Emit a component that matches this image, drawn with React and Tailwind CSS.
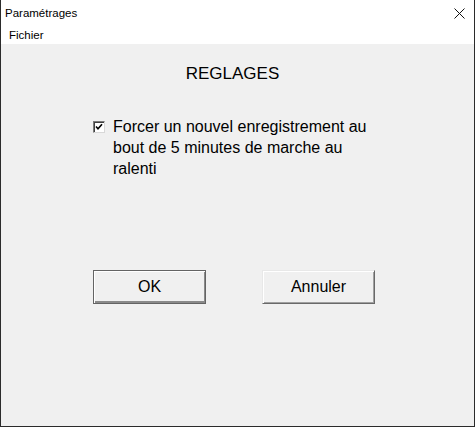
export default function App() {
  return (
    <div
      className="w-[475px] h-[427px] flex flex-col bg-[#f0f0f0] border-x border-b border-[#2b2b2b] text-black"
      style={{ fontFamily: '"Liberation Sans", Arial, sans-serif' }}
    >
      {/* Barre de titre */}
      <div className="h-[27px] bg-white flex items-center justify-between pl-[4px] pr-[9px]">
        <span className="text-[11.5px]">Paramétrages</span>
        <svg width="11" height="11" viewBox="0 0 11 11" className="mb-[1px]">
          <path d="M0.5 0.5 L10.5 10.5 M10.5 0.5 L0.5 10.5" stroke="#111" strokeWidth="1" fill="none" />
        </svg>
      </div>

      {/* Menu */}
      <div className="h-[17px] bg-white flex items-center pl-[8px]">
        <span className="text-[11.5px]">Fichier</span>
      </div>

      {/* Contenu */}
      <div className="flex-1 flex flex-col pt-[20px]">
        <div className="pr-[10px] text-center text-[17px] leading-[20px]">REGLAGES</div>

        <div className="flex items-start gap-[8px] mt-[32px] pl-[92px]">
          <div className="w-[12px] h-[12px] mt-[5px] bg-white border border-t-[#7a7a7a] border-l-[#7a7a7a] border-r-[#d8d8d8] border-b-[#d8d8d8] shadow-[inset_1px_1px_0_#404040] flex items-center justify-center">
            <svg width="8" height="8" viewBox="0 0 8 8">
              <path d="M1 3.5 L3 5.8 L7 1.2" stroke="#000" strokeWidth="1.6" fill="none" />
            </svg>
          </div>
          <p className="w-[262px] text-[16px] leading-[21px]">
            Forcer un nouvel enregistrement au bout de 5 minutes de marche au ralenti
          </p>
        </div>

        <div className="flex gap-[56px] mt-[91px] pl-[92px]">
          <button className="w-[113px] h-[34px] text-[16px] bg-[#f0f0f0] border border-[#646464] shadow-[inset_1px_1px_0_#ffffff,inset_-1px_-1px_0_#8a8a8a,inset_0_-2px_0_#8a8a8a]">
            OK
          </button>
          <button className="w-[113px] h-[34px] text-[16px] bg-[#f0f0f0] border border-t-[#e8e8e8] border-l-[#e8e8e8] border-r-[#696969] border-b-[#696969] shadow-[inset_1px_1px_0_#ffffff,inset_-1px_-1px_0_#a0a0a0]">
            Annuler
          </button>
        </div>
      </div>
    </div>
  )
}
